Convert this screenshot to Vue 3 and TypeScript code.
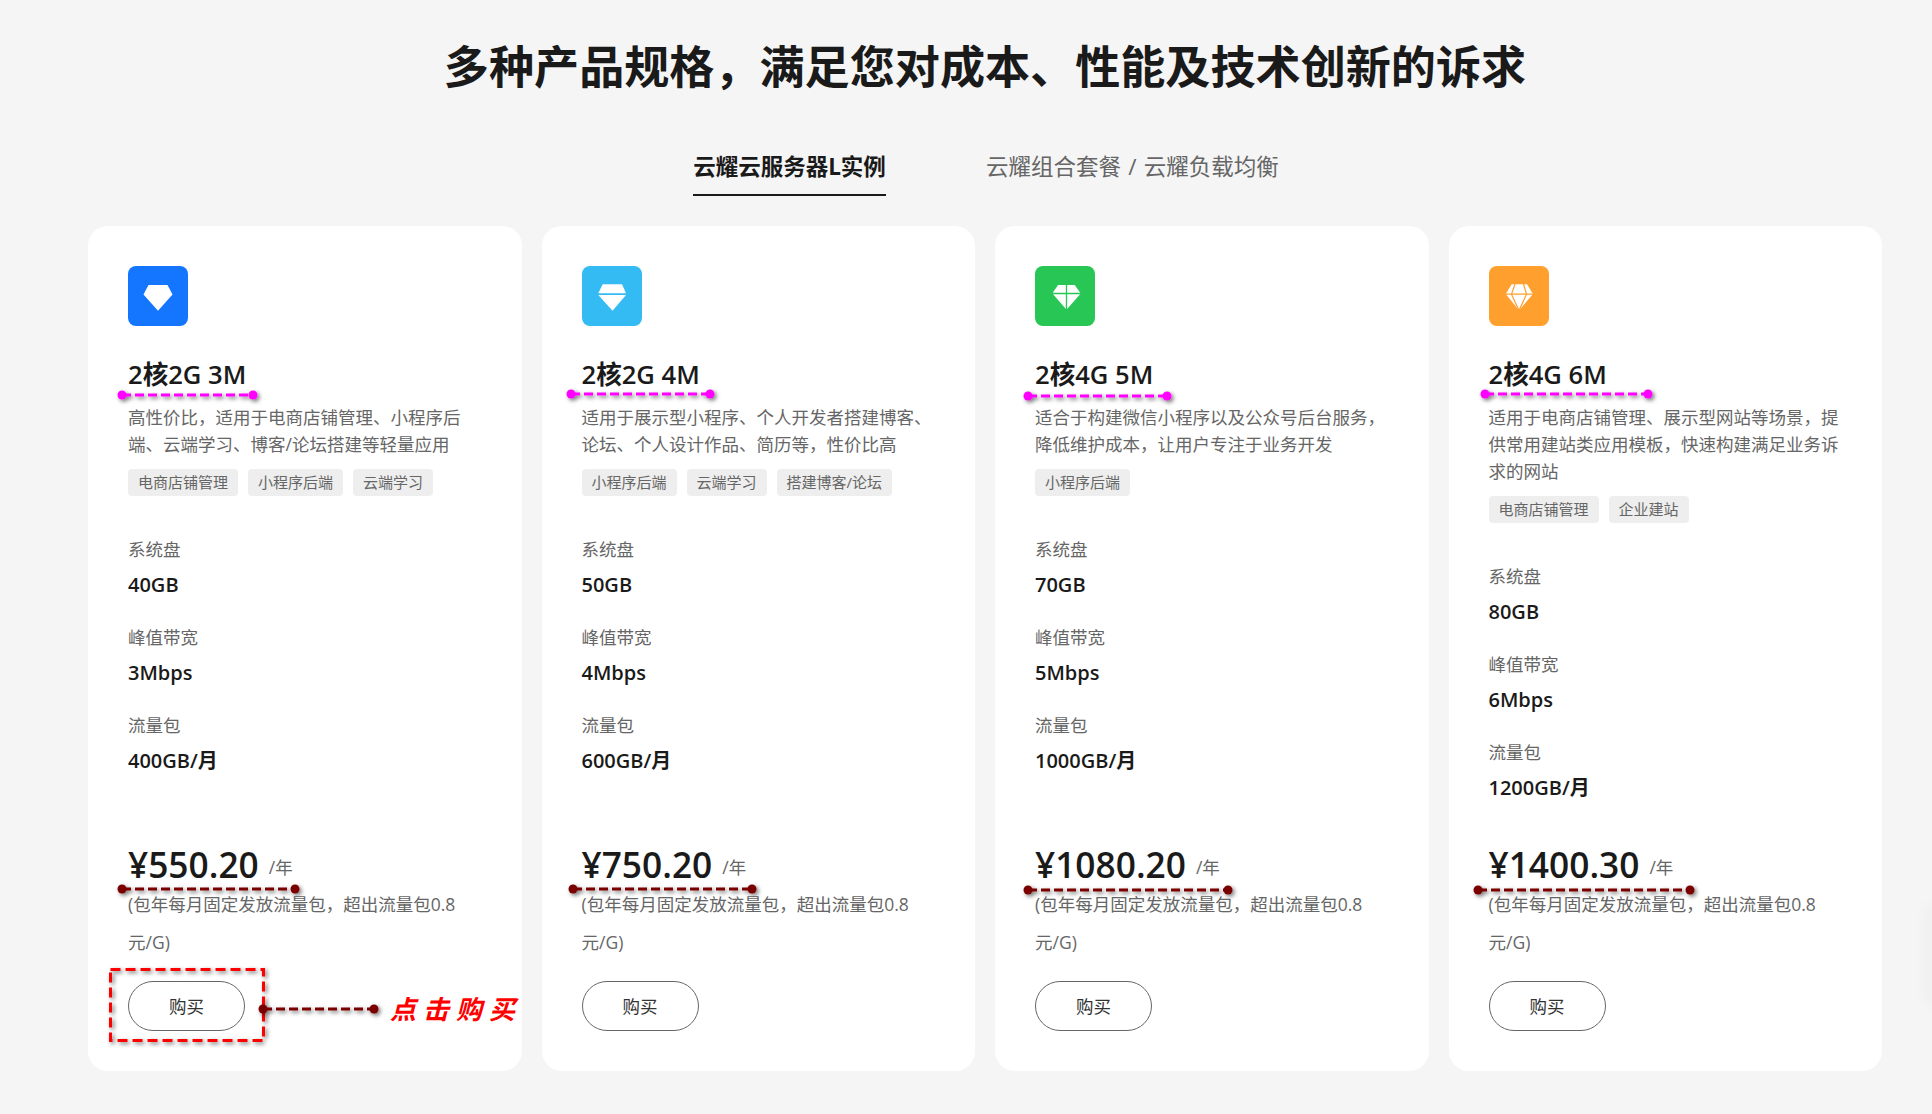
<script setup lang="ts">
interface Spec { label: string; value: string }
interface Plan {
  name: string; desc: string; tags: string[]; specs: Spec[]; price: string; color: string; kind: number;
}
const mk = (d: string, b: string, t: string): Spec[] => [
  { label: '系统盘', value: d }, { label: '峰值带宽', value: b }, { label: '流量包', value: t },
]
const plans: Plan[] = [
  { name: '2核2G 3M', desc: '高性价比，适用于电商店铺管理、小程序后端、云端学习、博客/论坛搭建等轻量应用', tags: ['电商店铺管理', '小程序后端', '云端学习'], specs: mk('40GB', '3Mbps', '400GB/月'), price: '¥550.20', color: '#1476ff', kind: 0 },
  { name: '2核2G 4M', desc: '适用于展示型小程序、个人开发者搭建博客、论坛、个人设计作品、简历等，性价比高', tags: ['小程序后端', '云端学习', '搭建博客/论坛'], specs: mk('50GB', '4Mbps', '600GB/月'), price: '¥750.20', color: '#35bbf3', kind: 1 },
  { name: '2核4G 5M', desc: '适合于构建微信小程序以及公众号后台服务，降低维护成本，让用户专注于业务开发', tags: ['小程序后端'], specs: mk('70GB', '5Mbps', '1000GB/月'), price: '¥1080.20', color: '#28c755', kind: 2 },
  { name: '2核4G 6M', desc: '适用于电商店铺管理、展示型网站等场景，提供常用建站类应用模板，快速构建满足业务诉求的网站', tags: ['电商店铺管理', '企业建站'], specs: mk('80GB', '6Mbps', '1200GB/月'), price: '¥1400.30', color: '#ff9f2d', kind: 3 },
]
const pink = [[122, 253, 395], [571, 710, 394], [1028, 1167, 396], [1485, 1648, 394]]
const dark = [[122, 295, 889], [573, 752, 889], [1028, 1228, 890], [1478, 1690, 890]]
</script>

<template>
  <div class="page">
    <h1 class="title">多种产品规格，满足您对成本、性能及技术创新的诉求</h1>
    <div class="tabs">
      <div class="tab active">云耀云服务器L实例</div>
      <div class="tab wide">云耀组合套餐 / 云耀负载均衡</div>
    </div>
    <div class="cards">
      <div v-for="p in plans" :key="p.name" class="card">
        <div class="icon" :style="{ background: p.color }">
          <svg width="60" height="60" viewBox="0 0 60 60">
            <path v-if="p.kind === 0" d="M20.500 19h19l5 9.500L30 44.700 15.500 28.500z" fill="#fff" />
            <g v-else-if="p.kind === 1" fill="#fff">
              <path d="M20.700 18.300H40l4 9H16.300z" />
              <path d="M16.300 29H44L30.500 44.700z" />
            </g>
            <g v-else-if="p.kind === 2" :stroke="p.color" stroke-width="1.300">
              <path d="M22.700 18.300H40l6.700 9.200L31.500 44.700 16.500 27.500z" fill="#fff" />
              <path d="M31.500 18v27M16 27.500h31" fill="none" />
            </g>
            <g v-else :stroke="p.color" stroke-width="1.200">
              <path d="M22.700 18.300H38l6 9.700L30 44.300 16.700 28z" fill="#fff" stroke="none" />
              <path d="M16 28.200h29M26 18l-3.500 10.200L30 44.500l7.500-16.300L34.500 18" fill="none" />
            </g>
          </svg>
        </div>
        <div class="name">{{ p.name }}</div>
        <p class="desc">{{ p.desc }}</p>
        <div class="tags">
          <span v-for="t in p.tags" :key="t" class="tag">{{ t }}</span>
        </div>
        <dl class="specs">
          <div v-for="s in p.specs" :key="s.label" class="spec">
            <dt>{{ s.label }}</dt>
            <dd>{{ s.value }}</dd>
          </div>
        </dl>
        <div class="bottom">
          <div class="price">{{ p.price }}<span class="unit">/年</span></div>
          <p class="note">(包年每月固定发放流量包，超出流量包0.8元/G)</p>
          <button class="buy" type="button">购买</button>
        </div>
      </div>
    </div>
    <div class="edge-shade"></div>
    <svg class="marks" width="1932" height="1114" viewBox="0 0 1932 1114">
      <defs>
        <filter id="sh" x="-10%" y="-200%" width="120%" height="500%">
          <feDropShadow dx="2" dy="2" stdDeviation="2" flood-color="#000" flood-opacity=".55" />
        </filter>
      </defs>
      <g v-for="l in pink" :key="l[0]" filter="url(#sh)" fill="#ff00ff">
        <line :x1="l[0]" :x2="l[1]" :y1="l[2]" :y2="l[2]" stroke="#ff00ff" stroke-width="3" stroke-dasharray="9 4" />
        <circle :cx="l[0]" :cy="l[2]" r="4.500" />
        <circle :cx="l[1]" :cy="l[2]" r="4.500" />
      </g>
      <g v-for="l in dark" :key="l[0]" filter="url(#sh)" fill="#7a0000">
        <line :x1="l[0]" :x2="l[1]" :y1="l[2]" :y2="l[2]" stroke="#7a0000" stroke-width="3" stroke-dasharray="9 4" />
        <circle :cx="l[0]" :cy="l[2]" r="4.500" />
        <circle :cx="l[1]" :cy="l[2]" r="4.500" />
      </g>
      <rect x="110.500" y="969.500" width="153" height="71" fill="none" stroke="#ff0000" stroke-width="3" stroke-dasharray="10 5" filter="url(#sh)" />
      <g filter="url(#sh)" fill="#7a0000">
        <line x1="263" x2="374" y1="1009" y2="1009" stroke="#7a0000" stroke-width="3" stroke-dasharray="9 4" />
        <circle cx="263" cy="1009" r="4.500" />
        <circle cx="374" cy="1009" r="4.500" />
      </g>
      <text x="390" y="1019" class="hand">点击购买</text>
    </svg>
  </div>
</template>

<style>
body { margin: 0; background: #f5f5f5; }
</style>

<style scoped>
.page {
  position: relative;
  width: 1932px;
  height: 1114px;
  overflow: hidden;
  box-sizing: border-box;
  padding: 0 50px 0 88px;
  background: #f5f5f5;
  color: #1a1a1a;
  font-family: "Open Sans", "Noto Sans CJK SC", sans-serif;
}
.title {
  margin: 0;
  padding-top: 36px;
  text-align: center;
  font-size: 45.100px;
  line-height: 62px;
  font-weight: 700;
}
.tabs {
  display: flex;
  justify-content: center;
  gap: 100px;
  margin-top: 49px;
  height: 49px;
  padding-left: 2px;
}
.tab {
  height: 49px;
  box-sizing: border-box;
  line-height: 40px;
  font-size: 22.500px;
  color: #666;
}
.tab.wide { word-spacing: 1.500px; }
.tab.active {
  color: #1a1a1a;
  font-weight: 700;
  border-bottom: 2px solid #1a1a1a;
}
.cards {
  display: flex;
  gap: 20px;
  margin-top: 30px;
  height: 845px;
}
.card {
  flex: 1 1 0;
  min-width: 0;
  display: flex;
  flex-direction: column;
  box-sizing: border-box;
  padding: 40px;
  background: #fff;
  border-radius: 20px;
}
.icon {
  width: 60px;
  height: 60px;
  border-radius: 8px;
  flex: none;
}
.icon svg { display: block; }
.name {
  margin-top: 32px;
  font-size: 25.600px;
  line-height: 34px;
  font-weight: 600;
}
.desc {
  margin: 12px 0 0;
  font-size: 17.500px;
  line-height: 27px;
  color: #666;
}
.tags {
  display: flex;
  gap: 10px;
  margin-top: 11px;
}
.tag {
  height: 27px;
  line-height: 27px;
  padding: 0 10px;
  border-radius: 4px;
  background: #eee;
  font-size: 15px;
  color: #666;
}
.specs { margin: 36px 0 0; }
.spec { margin: 0 0 16px; }
.spec dt {
  font-size: 17.500px;
  line-height: 34px;
  color: #666;
}
.spec dd {
  margin: 0;
  font-size: 20px;
  line-height: 38px;
  font-weight: 600;
}
.bottom { margin-top: auto; }
.price {
  display: flex;
  align-items: center;
  height: 28px;
  margin-bottom: 7px;
  font-size: 35.300px;
  line-height: 28px;
  font-weight: 600;
}
.unit {
  margin-left: 10px;
  padding-top: 8px;
  font-size: 17.500px;
  line-height: 1;
  font-weight: 400;
  color: #666;
}
.note {
  margin: 0;
  font-size: 17.500px;
  line-height: 38px;
  color: #666;
}
.buy {
  display: block;
  width: 117px;
  height: 50px;
  margin-top: 20px;
  padding: 0 0 2px;
  background: #fff;
  border: 1px solid #666;
  border-radius: 25px;
  font: inherit;
  font-size: 17.500px;
  color: #333;
}
.edge-shade {
  position: absolute;
  left: 1924px;
  top: 905px;
  width: 30px;
  height: 100px;
  border-radius: 12px;
  background: #f0f0f0;
  filter: blur(4px);
}
.marks {
  position: absolute;
  left: 0;
  top: 0;
  pointer-events: none;
}
.hand {
  font-family: "Noto Sans CJK SC", sans-serif;
  font-size: 26px;
  font-weight: 700;
  font-style: italic;
  fill: #f00;
  letter-spacing: 7px;
}
</style>
